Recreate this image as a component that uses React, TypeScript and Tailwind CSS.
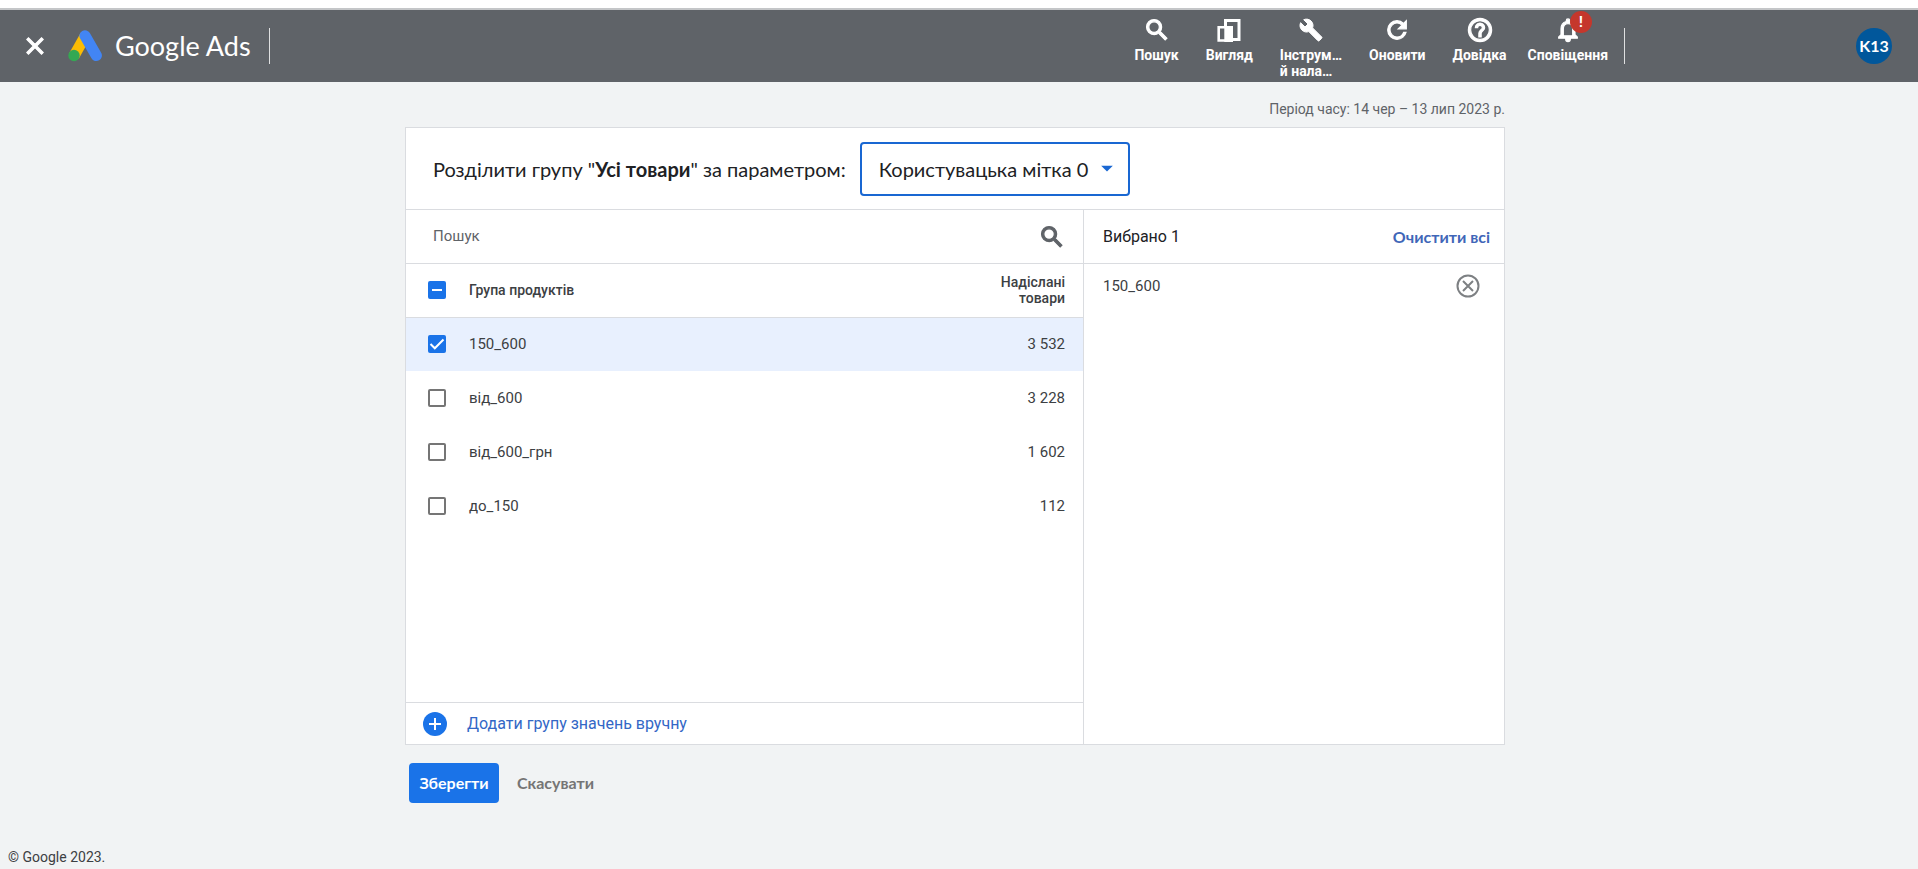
import { useState, type ReactNode } from 'react'
import {
  MdArrowDropDown, MdBuild, MdClose, MdHelpOutline, MdNotificationsNone, MdRefresh, MdSearch,
} from 'react-icons/md'

type Group = { id: string; count: string }

const GROUPS: Group[] = [
  { id: '150_600', count: '3 532' },
  { id: 'від_600', count: '3 228' },
  { id: 'від_600_грн', count: '1 602' },
  { id: 'до_150', count: '112' },
]

// thickens the glyph only, not the icon's empty bounding path
const HEAVY = '[&>path:last-child]:stroke-1'

function AdsLogo() {
  return (
    <svg viewBox="0 0 34 32" className="w-[34px] h-8 shrink-0" fill="none" strokeLinecap="round">
      <path d="M17.5 5.5 6 26" stroke="#fbbc04" strokeWidth="11" strokeLinecap="butt" />
      <circle cx="6" cy="25.500" r="5.700" fill="#34a853" />
      <path d="M17 5.800 28.300 25.500" stroke="#4285f4" strokeWidth="11.200" />
    </svg>
  )
}

function ViewIcon() {
  return (
    <svg viewBox="0 0 28 28" className="w-7 h-7" fill="none">
      <path d="M10.500 10V4.500H24V23.500h-6" stroke="#fff" strokeWidth="3" />
      <path d="M10 11.200H3.700V24.500H10" stroke="#fff" strokeWidth="2.600" />
      <path d="M9.300 10H18V26H9.300z" fill="#fff" />
    </svg>
  )
}

function CircledX() {
  return (
    <svg viewBox="0 0 24 24" className="w-6 h-6" fill="none" stroke="#7d8083" strokeWidth="2">
      <circle cx="12" cy="12" r="10.500" />
      <path d="m7 7 10 10M17 7 7 17" />
    </svg>
  )
}

function NavItem({ icon, label, badge }: { icon: ReactNode; label: ReactNode; badge?: string }) {
  return (
    <button className="flex flex-col items-center gap-[3px] pt-[6px] text-sm leading-4 font-bold">
      <span className="relative flex h-7 w-7 items-center justify-center">
        {icon}
        {badge && (
          <span className="absolute -top-[5px] left-4 flex h-[22px] w-[22px] items-center justify-center rounded-full bg-[#c5372c]">
            {badge}
          </span>
        )}
      </span>
      <span className="text-left">{label}</span>
    </button>
  )
}

function Checkbox({ label, checked, mixed, onChange }: {
  label: string; checked: boolean; mixed?: boolean; onChange: () => void
}) {
  const filled = checked || mixed
  return (
    <span className="relative block h-[18px] w-[18px]">
      <input
        type="checkbox"
        aria-label={label}
        checked={checked}
        onChange={onChange}
        className={`block h-[18px] w-[18px] appearance-none rounded-[2px] ${filled ? 'bg-[#1a73e8]' : 'border-2 border-[#757575]'}`}
      />
      {filled && (
        <svg viewBox="0 0 18 18" className="pointer-events-none absolute inset-0" fill="none" stroke="#fff" strokeWidth="2">
          {mixed ? <path d="M4 9h10" /> : <path d="m2.500 9 4.300 4.300L15.500 4.500" />}
        </svg>
      )}
    </span>
  )
}

export default function App() {
  const [dimension, setDimension] = useState('label0')
  const [query, setQuery] = useState('')
  const [selected, setSelected] = useState<string[]>(['150_600'])

  function toggle(id: string) {
    setSelected((prev) => (prev.includes(id) ? prev.filter((s) => s !== id) : [...prev, id]))
  }

  const all = selected.length === GROUPS.length
  const visible = GROUPS.filter((g) => g.id.includes(query))

  return (
    <div className="min-h-screen flex flex-col bg-[#f1f3f4] font-[Roboto,sans-serif] text-[#3c4043]">
      {/* Top bar */}
      <div className="h-2 bg-white" />
      <header className="flex h-[74px] items-start border-t-2 border-[#c4c6c8] bg-[#5f6368] text-white">
        <div className="flex flex-1 items-center pl-[21px] pt-[18px] h-[54px]">
          <button aria-label="Закрити"><MdClose size={28} className={HEAVY} /></button>
          <div className="ml-[19px]"><AdsLogo /></div>
          <span className="ml-[13px] font-[Lato,sans-serif] text-[27px] leading-9">Google Ads</span>
          <span className="ml-[18px] h-9 w-px bg-white/80" />
        </div>
        <nav className="flex items-start gap-[27px]">
          <NavItem icon={<MdSearch size={28} className={HEAVY} />} label="Пошук" />
          <NavItem icon={<ViewIcon />} label="Вигляд" />
          <NavItem icon={<MdBuild size={24} className={HEAVY} />} label={<>Інструм…<br />й нала…</>} />
          <NavItem icon={<MdRefresh size={28} className={HEAVY} />} label="Оновити" />
          <NavItem icon={<MdHelpOutline size={28} className={HEAVY} />} label="Довідка" />
          <div className="-ml-[6px]">
            <NavItem icon={<MdNotificationsNone size={28} className={HEAVY} />} label="Сповіщення" badge="!" />
          </div>
        </nav>
        <span className="ml-4 mt-[18px] h-9 w-px bg-white/80" />
        <div className="ml-[231px] mr-[26px] mt-[18px] flex h-9 w-9 items-center justify-center rounded-full bg-[#01579b] font-[Lato,sans-serif] text-base leading-none font-bold">
          K13
        </div>
      </header>

      <main className="mx-auto w-full max-w-[1108px] pr-2">
        <p className="pt-[17px] pb-2 text-right text-sm text-[#5f6368]">Період часу: 14 чер – 13 лип 2023 р.</p>

        <section className="border border-[#dadce0] bg-white">
          <div className="flex h-[82px] items-center border-b border-[#dadce0] pl-[27px] font-[Lato,sans-serif] text-xl text-[#202124]">
            <label htmlFor="dimension">
              Розділити групу "<b>Усі товари</b>" за параметром:
            </label>
            <div className="relative ml-[14px]">
              <select
                id="dimension"
                value={dimension}
                onChange={(e) => setDimension(e.target.value)}
                className="h-[54px] w-[270px] appearance-none rounded-[4px] border-2 border-[#1967d2] bg-white pl-[17px]"
              >
                <option value="label0">Користувацька мітка 0</option>
                <option value="label1">Користувацька мітка 1</option>
              </select>
              <MdArrowDropDown size={28} className="pointer-events-none absolute right-[9px] top-3 text-[#1967d2]" />
            </div>
          </div>

          <div className="flex">
            {/* Available groups */}
            <div className="flex flex-1 flex-col border-r border-[#dadce0]">
              <div className="flex h-[54px] items-center border-b border-[#dadce0] pl-[27px] pr-[17px]">
                <input
                  type="text"
                  aria-label="Пошук"
                  placeholder="Пошук"
                  value={query}
                  onChange={(e) => setQuery(e.target.value)}
                  className="flex-1 text-[15px] outline-none placeholder:text-[#5f6368]"
                />
                <MdSearch size={28} className={`${HEAVY} text-[#5f6368]`} />
              </div>
              <table className="w-full text-[15px]">
                <thead>
                  <tr className="h-[53px] border-b border-[#dadce0] text-sm leading-4">
                    <th className="w-[63px] pl-[22px]">
                      <Checkbox
                        label="Усі групи"
                        checked={all}
                        mixed={selected.length > 0 && !all}
                        onChange={() => setSelected(all ? [] : GROUPS.map((g) => g.id))}
                      />
                    </th>
                    <th className="text-left font-medium">Група продуктів</th>
                    <th className="pr-[18px] text-right font-medium">Надіслані<br />товари</th>
                  </tr>
                </thead>
                <tbody>
                  {visible.map((g) => {
                    const on = selected.includes(g.id)
                    return (
                      <tr key={g.id} className={`h-[54px] ${on ? 'bg-[#e8f0fe]' : ''}`}>
                        <td className="pl-[22px]">
                          <Checkbox label={g.id} checked={on} onChange={() => toggle(g.id)} />
                        </td>
                        <td>{g.id}</td>
                        <td className="pr-[18px] text-right">{g.count}</td>
                      </tr>
                    )
                  })}
                </tbody>
              </table>
              <button className="mt-[169px] flex h-[42px] items-center gap-5 border-t border-[#dadce0] pl-[17px] text-base text-[#3367c6]">
                <span className="flex h-6 w-6 items-center justify-center rounded-full bg-[#1a73e8]">
                  <svg viewBox="0 0 12 12" className="h-3 w-3" stroke="#fff" strokeWidth="2">
                    <path d="M6 0v12M0 6h12" />
                  </svg>
                </span>
                Додати групу значень вручну
              </button>
            </div>

            {/* Selected groups */}
            <div className="w-[420px]">
              <div className="flex h-[54px] items-center justify-between border-b border-[#dadce0] pl-[19px] pr-[14px]">
                <span className="text-base text-[#202124]">Вибрано {selected.length}</span>
                <button onClick={() => setSelected([])} className="font-[Lato,sans-serif] text-base font-bold text-[#4066b8]">
                  Очистити всі
                </button>
              </div>
              <ul>
                {selected.map((id) => (
                  <li key={id} className="flex h-[44px] items-center justify-between pl-[19px] pr-6 text-[15px]">
                    {id}
                    <button aria-label={`Вилучити ${id}`} onClick={() => toggle(id)}><CircledX /></button>
                  </li>
                ))}
              </ul>
            </div>
          </div>
        </section>

        <div className="mt-[18px] flex gap-[10px] pl-1 font-[Lato,sans-serif] text-base font-bold">
          <button className="h-10 w-[90px] rounded-[4px] bg-[#1a73e8] text-white">Зберегти</button>
          <button className="px-2 text-[#757575]">Скасувати</button>
        </div>
      </main>

      <footer className="mt-auto pl-2 pb-[2px] text-sm">© Google 2023.</footer>
    </div>
  )
}
